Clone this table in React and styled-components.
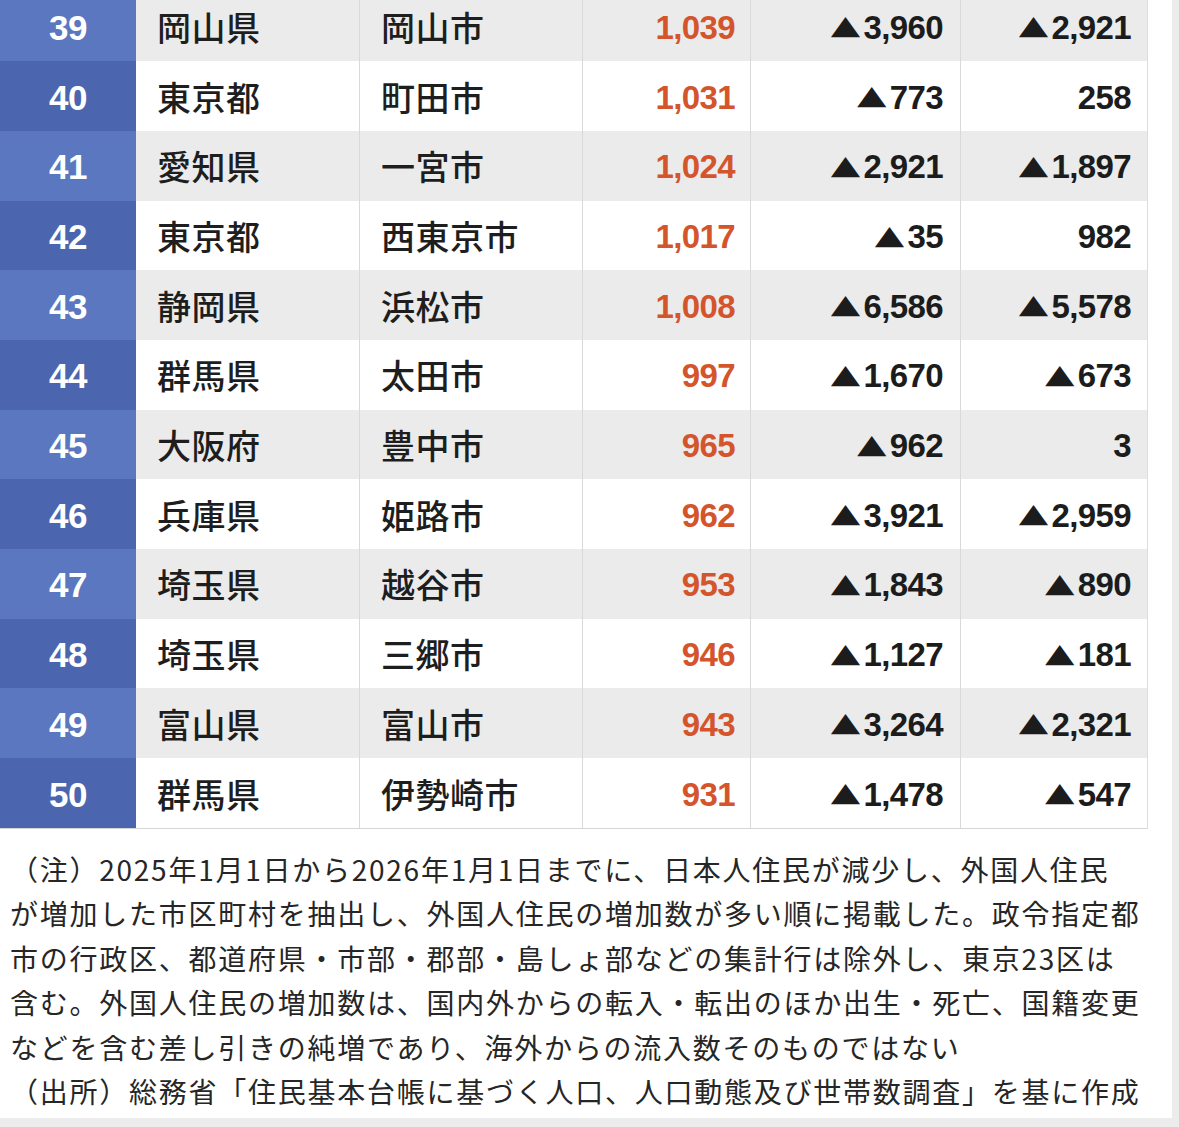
import React from 'react';
import styled, { createGlobalStyle } from 'styled-components';

const GlobalStyle = createGlobalStyle`
  html, body {
    margin: 0;
    padding: 0;
    background: #ececec;
  }
  body {
    font-family: 'Noto Sans CJK JP', sans-serif;
    overflow: hidden;
  }
`;

const rows = [
  { rank: 39, pref: '岡山県', city: '岡山市', foreign: '1,039', japanese: '▲3,960', total: '▲2,921' },
  { rank: 40, pref: '東京都', city: '町田市', foreign: '1,031', japanese: '▲773', total: '258' },
  { rank: 41, pref: '愛知県', city: '一宮市', foreign: '1,024', japanese: '▲2,921', total: '▲1,897' },
  { rank: 42, pref: '東京都', city: '西東京市', foreign: '1,017', japanese: '▲35', total: '982' },
  { rank: 43, pref: '静岡県', city: '浜松市', foreign: '1,008', japanese: '▲6,586', total: '▲5,578' },
  { rank: 44, pref: '群馬県', city: '太田市', foreign: '997', japanese: '▲1,670', total: '▲673' },
  { rank: 45, pref: '大阪府', city: '豊中市', foreign: '965', japanese: '▲962', total: '3' },
  { rank: 46, pref: '兵庫県', city: '姫路市', foreign: '962', japanese: '▲3,921', total: '▲2,959' },
  { rank: 47, pref: '埼玉県', city: '越谷市', foreign: '953', japanese: '▲1,843', total: '▲890' },
  { rank: 48, pref: '埼玉県', city: '三郷市', foreign: '946', japanese: '▲1,127', total: '▲181' },
  { rank: 49, pref: '富山県', city: '富山市', foreign: '943', japanese: '▲3,264', total: '▲2,321' },
  { rank: 50, pref: '群馬県', city: '伊勢崎市', foreign: '931', japanese: '▲1,478', total: '▲547' },
];

const noteLines = [
  '（注）2025年1月1日から2026年1月1日までに、日本人住民が減少し、外国人住民',
  'が増加した市区町村を抽出し、外国人住民の増加数が多い順に掲載した。政令指定都',
  '市の行政区、都道府県・市部・郡部・島しょ部などの集計行は除外し、東京23区は',
  '含む。外国人住民の増加数は、国内外からの転入・転出のほか出生・死亡、国籍変更',
  'などを含む差し引きの純増であり、海外からの流入数そのものではない',
  '（出所）総務省「住民基本台帳に基づく人口、人口動態及び世帯数調査」を基に作成',
];

// splits "▲1,234" into the mark and the digits
const Signed = ({ value }) => {
  const neg = value.startsWith('▲');
  return (
    <>
      {neg && <Tri>▲</Tri>}
      {neg ? value.slice(1) : value}
    </>
  );
};

export default function App() {
  return (
    <>
      <GlobalStyle />
      <Card>
        <Table>
          {rows.map((r, i) => (
            <Row key={r.rank} $striped={i % 2 === 0}>
              <RankCell $striped={i % 2 === 0}>{r.rank}</RankCell>
              <NameCell>{r.pref}</NameCell>
              <NameCell>{r.city}</NameCell>
              <NumCell $accent>{r.foreign}</NumCell>
              <NumCell><Signed value={r.japanese} /></NumCell>
              <NumCell $last><Signed value={r.total} /></NumCell>
            </Row>
          ))}
        </Table>
        <Notes>
          {noteLines.map((line) => (
            <NoteLine key={line}>{line}</NoteLine>
          ))}
        </Notes>
      </Card>
    </>
  );
}

const Card = styled.div`
  width: 1172px;
  height: 1118px;
  background: #ffffff;
  overflow: hidden;
`;

const Table = styled.div`
  width: 1148px;
  margin-top: -8.4px;
  border-bottom: 1px solid #d6d6d6;
  border-right: 1px solid #dddddd;
  box-sizing: border-box;
`;

const Row = styled.div`
  display: grid;
  grid-template-columns: 136px 224px 223px 168px 210px 187px;
  height: 69.7px;
  background: ${(p) => (p.$striped ? '#ebebeb' : '#ffffff')};
`;

const RankCell = styled.div`
  display: flex;
  align-items: center;
  justify-content: center;
  padding-top: 3px;
  background: ${(p) => (p.$striped ? '#5a77bf' : '#4b66ae')};
  color: #ffffff;
  font-family: 'Liberation Sans', Arial, sans-serif;
  font-weight: 700;
  font-size: 35px;
  letter-spacing: -0.5px;
`;

const NameCell = styled.div`
  display: flex;
  align-items: center;
  padding-left: 21px;
  border-right: 1px solid #d9d9d9;
  color: #1e1e1e;
  font-family: 'Noto Sans CJK JP', sans-serif;
  font-weight: 500;
  font-size: 34px;
  letter-spacing: 0.5px;
`;

const NumCell = styled.div`
  display: flex;
  align-items: center;
  justify-content: flex-end;
  padding-top: 3px;
  padding-right: ${(p) => (p.$accent ? '15px' : '17px')};
  border-right: ${(p) => (p.$last ? 'none' : '1px solid #d9d9d9')};
  color: ${(p) => (p.$accent ? '#d4552c' : '#1c1c1c')};
  font-family: 'Liberation Sans', Arial, sans-serif;
  font-weight: 700;
  font-size: 33px;
  letter-spacing: -0.6px;
`;

const Tri = styled.span`
  display: inline-block;
  margin-right: 3px;
  font-family: 'Noto Sans CJK JP', sans-serif;
  font-size: 31px;
  transform: scaleY(0.8);
`;

const Notes = styled.div`
  padding: 18px 0 0 10px;
  color: #262626;
  font-family: 'Noto Sans CJK JP', sans-serif;
  font-size: 28px;
  line-height: 44.5px;
  letter-spacing: 1.75px;
`;

const NoteLine = styled.div`
  white-space: nowrap;
`;
